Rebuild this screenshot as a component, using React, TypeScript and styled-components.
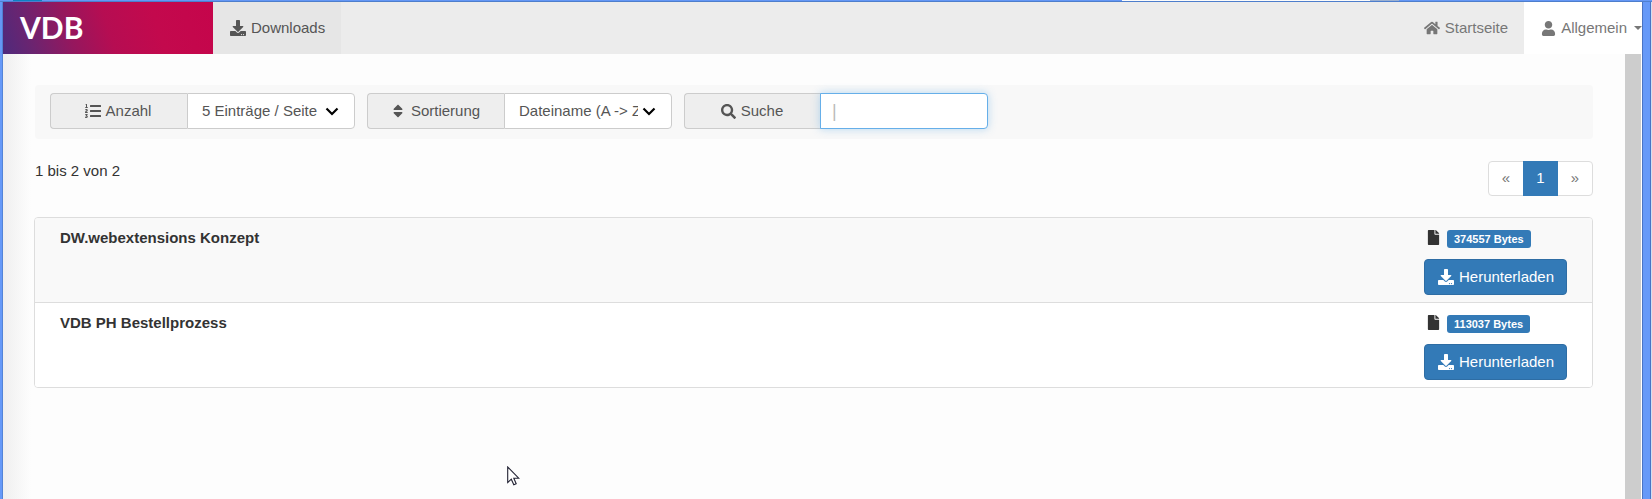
import React from "react";
import styled, { createGlobalStyle, css } from "styled-components";
import {
  FaDownload,
  FaFile,
  FaHome,
  FaListOl,
  FaSearch,
  FaSort,
  FaUser,
} from "react-icons/fa";

const GlobalStyle = createGlobalStyle`
  *, *::before, *::after { box-sizing: border-box; }
  body {
    margin: 0;
    background: #fdfdfd;
    color: #333;
    font: 15px/20px "Liberation Sans", Arial, sans-serif;
  }
  a { color: inherit; text-decoration: none; }
  button, input, select { font: inherit; }
`;

const Window = styled.div`
  display: grid;
  grid-template-columns: 3px minmax(0, 1fr) 10px;
  grid-template-rows: 2px minmax(0, 1fr);
  height: 100vh;
  overflow: hidden;
`;

const TopEdge = styled.div`
  grid-column: 1 / -1;
  display: flex;
  padding: 0 253px 0 13px;
  background: #6699f8;
  border-bottom: 1px solid #5080d0;
`;

const EdgePart = styled.span<{ $width: number; $color: string; $push?: boolean }>`
  width: ${(p) => p.$width}px;
  background: ${(p) => p.$color};
  ${(p) => p.$push && css`margin-left: auto;`}
`;

const LeftEdge = styled.div`
  background: #6699f8;
  border-right: 1px solid #5384d8;
`;

const RightEdge = styled.div`
  background: #6699f8;
  border-left: 1px solid #4a74c4;
  border-right: 1px solid #d3dff2;
  box-shadow: inset -1px 0 #4a74c4;
`;

const Page = styled.div`
  display: flex;
  flex-direction: column;
  background: #fdfdfd;
`;

const Navbar = styled.nav`
  display: flex;
  flex: none;
  height: 52px;
  background: #ececec;
  box-shadow: 0 1px 6px rgba(0, 0, 0, 0.06);
`;

const Brand = styled.a`
  width: 210px;
  padding: 0 17px;
  background: linear-gradient(72deg, #4e2a7c, #6b2470 14%, #95175e 32%, #b60d52 50%, #c3094d 72%, #c5054b);
  color: #fff;
  font: 700 30px/51px Lato, sans-serif;
`;

const NavLink = styled.a<{ $tone?: "current" | "open"; $end?: boolean }>`
  display: flex;
  align-items: center;
  gap: 5px;
  padding: 0 16px 0 17px;
  color: #777;
  ${(p) => p.$end && css`margin-left: auto;`}
  ${(p) => p.$tone === "current" && css`background: #e6e6e6; color: #555;`}
  ${(p) => p.$tone === "open" && css`background: #fff; padding-right: 0;`}
`;

const Body = styled.div`
  display: flex;
  flex: 1;
  min-height: 0;
`;

const Main = styled.main`
  flex: 1;
  padding: 31px 32px 0;
  background: linear-gradient(90deg, #efefef, #fdfdfd 28px);
`;

const Scrollbar = styled.div`
  width: 17px;
  background: #cdcdcd;
  border-right: 1px solid #fff;
`;

const Toolbar = styled.form`
  display: flex;
  gap: 12px;
  padding: 8px 15px 10px;
  border-radius: 4px;
  background: #f8f8f8;
`;

const Group = styled.div`
  display: flex;
  width: 305px;
  height: 36px;
`;

const GroupLabel = styled.label`
  display: flex;
  flex: none;
  align-items: center;
  justify-content: center;
  gap: 5px;
  width: 137px;
  padding-right: 2px;
  border: 1px solid #ccc;
  border-right: 0;
  border-radius: 4px 0 0 4px;
  background: #eee;
  color: #555;
`;

const SelectWrap = styled.span`
  display: grid;
  flex: 1;
  align-items: center;
  min-width: 0;

  & > * { grid-area: 1 / 1; }
  & > svg { justify-self: end; margin-right: 16px; pointer-events: none; }
`;

const field = css`
  width: 100%;
  height: 36px;
  border: 1px solid #ccc;
  border-radius: 0 4px 4px 0;
  background: #fff;
  color: #555;
  outline: 0;
`;

const Select = styled.select`
  ${field}
  appearance: none;
  padding: 0 33px 0 14px;
  overflow: hidden;
  text-overflow: clip;
`;

const SearchInput = styled.input`
  ${field}
  flex: none;
  width: 168px;
  margin-left: -1px;
  padding: 0 11px;
  border-color: #66afe9;
  box-shadow: 0 0 8px rgba(102, 175, 233, 0.45);
  &::placeholder { color: #bbb; opacity: 1; font-size: 18px; }
`;

const Summary = styled.div`
  display: flex;
  align-items: flex-start;
  justify-content: space-between;
  padding-top: 22px;
`;

const Pager = styled.div`
  display: flex;
  border: 1px solid #ddd;
  border-radius: 4px;
  background: #fff;
`;

const PageLink = styled.a<{ $current?: boolean }>`
  width: 35px;
  margin: -1px 0;
  padding: 7px 0 8px;
  color: #777;
  text-align: center;
  &:first-child, &:last-child { width: 34px; }
  ${(p) => p.$current && css`background: #337ab7; color: #fff;`}
`;

const Files = styled.ul`
  margin: 21px 0 0 -1px;
  padding: 0;
  overflow: hidden;
  border: 1px solid #ddd;
  border-radius: 4px;
  list-style: none;
`;

const FileRow = styled.li`
  display: flex;
  justify-content: space-between;
  height: 85px;
  padding: 10px 25px 0;
  background: #fff;
  border-bottom: 1px solid #ddd;
  &:nth-child(odd) { background: #f9f9f9; }
  &:last-child { height: 84px; border-bottom: 0; }
`;

const FileName = styled.strong`
  line-height: 20px;
`;

const FileActions = styled.div`
  width: 143px;
`;

const FileMeta = styled.div`
  display: flex;
  align-items: center;
  gap: 6px;
  height: 20px;
  margin-bottom: 11px;
  padding-left: 2px;
  & > svg { margin-bottom: 2px; }
`;

const Badge = styled.span`
  margin-top: 2px;
  padding: 0 7px;
  border-radius: 3px;
  background: #337ab7;
  color: #fff;
  font-size: 11px;
  font-weight: 700;
  line-height: 18px;
`;

const DownloadButton = styled.button`
  display: flex;
  align-items: center;
  justify-content: center;
  gap: 5px;
  width: 100%;
  height: 36px;
  padding: 0 0 0 1px;
  border: 1px solid #2e6da4;
  border-radius: 4px;
  background: #337ab7;
  color: #fff;
`;

const Pointer = styled.svg`
  position: absolute;
  left: 507px;
  top: 466px;
  pointer-events: none;
`;

const Chevron = () => (
  <svg width="14" height="9" viewBox="0 0 14 9" aria-hidden="true">
    <path d="M1.5 1.5 7 7 12.5 1.5" fill="none" stroke="#000" strokeWidth="2.2" />
  </svg>
);

const Caret = () => (
  <svg width="10" height="4" viewBox="0 0 10 4" aria-hidden="true">
    <path d="M2 0h8L6 4z" fill="currentColor" />
  </svg>
);

const files = [
  { name: "DW.webextensions Konzept", size: "374557 Bytes" },
  { name: "VDB PH Bestellprozess", size: "113037 Bytes" },
];

export default function App() {
  return (
    <>
      <GlobalStyle />
      <Window>
        <TopEdge>
          <EdgePart $width={29} $color="#0f83c6" />
          <EdgePart $width={248} $color="#fff" $push />
          <EdgePart $width={29} $color="#9db3d4" />
        </TopEdge>
        <LeftEdge />
        <Page>
          <Navbar>
            <Brand href="#">VDB</Brand>
            <NavLink href="#" $tone="current"><FaDownload size={16} />Downloads</NavLink>
            <NavLink href="#" $end><FaHome size={16} />Startseite</NavLink>
            <NavLink href="#" $tone="open"><FaUser size={15} />Allgemein<Caret /></NavLink>
          </Navbar>
          <Body>
            <Main>
              <Toolbar>
                <Group>
                  <GroupLabel htmlFor="count"><FaListOl size={16} />Anzahl</GroupLabel>
                  <SelectWrap>
                    <Select id="count"><option>5 Einträge / Seite</option></Select>
                    <Chevron />
                  </SelectWrap>
                </Group>
                <Group>
                  <GroupLabel htmlFor="sort"><FaSort size={16} />Sortierung</GroupLabel>
                  <SelectWrap>
                    <Select id="sort"><option>Dateiname (A -&gt; Z)</option></Select>
                    <Chevron />
                  </SelectWrap>
                </Group>
                <Group>
                  <GroupLabel htmlFor="search"><FaSearch size={15} />Suche</GroupLabel>
                  <SearchInput id="search" type="text" placeholder="|" />
                </Group>
              </Toolbar>
              <Summary>
                <span>1 bis 2 von 2</span>
                <Pager>
                  <PageLink href="#">«</PageLink>
                  <PageLink href="#" $current>1</PageLink>
                  <PageLink href="#">»</PageLink>
                </Pager>
              </Summary>
              <Files>
                {files.map((file) => (
                  <FileRow key={file.name}>
                    <FileName>{file.name}</FileName>
                    <FileActions>
                      <FileMeta><FaFile size={15} /><Badge>{file.size}</Badge></FileMeta>
                      <DownloadButton type="button"><FaDownload size={16} />Herunterladen</DownloadButton>
                    </FileActions>
                  </FileRow>
                ))}
              </Files>
            </Main>
            <Scrollbar />
          </Body>
        </Page>
        <RightEdge />
      </Window>
      <Pointer width="13" height="20" viewBox="0 0 13 20" aria-hidden="true">
        <path d="M.7 1v15.5l3.6-3.3 2.5 5.6 2.4-1-2.4-5.6h4.9z" fill="#fff" stroke="#223" strokeWidth="1.1" />
      </Pointer>
    </>
  );
}
